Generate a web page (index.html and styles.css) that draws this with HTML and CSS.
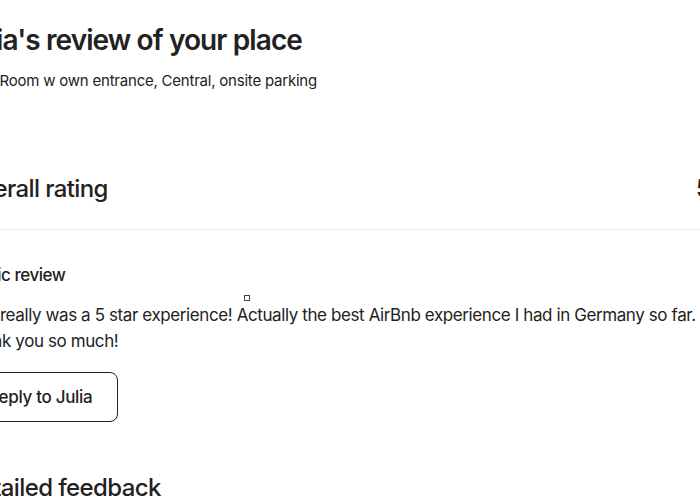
FILE: index.html
```html
<!DOCTYPE html>
<html lang="en">
<head>
<meta charset="utf-8">
<title>Julia's review of your place</title>
<link rel="stylesheet" href="styles.css">
</head>
<body>
<main class="page">
  <header class="head">
    <h1 class="title">Julia's review of your place</h1>
    <p class="listing">Cozy Room w own entrance, Central, onsite parking</p>
  </header>
  <section class="rating-row">
    <h2 class="section-title">Overall rating</h2>
    <span class="rating-value">5</span>
  </section>
  <section class="public">
    <h3 class="sub-title">Public review</h3>
    <p class="review-text"><span class="line">This really was a 5 star experience! Actually the best AirBnb experience I had in Germany so far.</span><span class="line">Thank you so much!</span></p>
    <button class="reply-btn" type="button">Reply to Julia</button>
  </section>
  <section class="detailed">
    <h2 class="section-title">Detailed feedback</h2>
  </section>
  <span class="cursor-mark"></span>
</main>
</body>
</html>
```
FILE: styles.css
```css
html, body {
  margin: 0;
  padding: 0;
  background: #ffffff;
  overflow: hidden;
}
body {
  font-family: Inter, "Noto Sans", "Liberation Sans", sans-serif;
  color: #222222;
  width: 700px;
  height: 500px;
}
.page {
  position: relative;
  margin-left: -37px;
  width: 748px;
}
.head {
  padding-top: 24px;
}
.title {
  margin: 0;
  font-size: 28px;
  line-height: 32px;
  font-weight: 600;
  letter-spacing: -0.9px;
  text-indent: -5px;
}
.listing {
  margin: 15px 0 0 0;
  font-size: 15px;
  line-height: 20px;
  font-weight: 400;
  letter-spacing: -0.22px;
  text-indent: -3px;
}
.rating-row {
  display: flex;
  justify-content: space-between;
  align-items: baseline;
  margin-top: 84px;
  padding-bottom: 26px;
  border-bottom: 1px solid #ebebeb;
}
.section-title {
  margin: 0;
  font-size: 24px;
  line-height: 28px;
  font-weight: 500;
  letter-spacing: -0.62px;
}
.rating-value {
  font-size: 24px;
  line-height: 28px;
  font-weight: 600;
}
.public {
  padding-top: 34px;
}
.sub-title {
  margin: 0;
  font-size: 17px;
  line-height: 22px;
  font-weight: 500;
  letter-spacing: -0.45px;
}
.review-text {
  margin: 16px 0 0 0;
  font-size: 17px;
  line-height: 26px;
  letter-spacing: -0.4px;
  white-space: nowrap;
}
.line {
  display: block;
}
.reply-btn {
  margin-top: 18px;
  height: 50px;
  padding: 0 25px 0 24px;
  border: 1px solid #222222;
  border-radius: 8px;
  background: #ffffff;
  color: #222222;
  font-family: inherit;
  font-size: 17px;
  font-weight: 500;
  letter-spacing: -0.3px;
}
.detailed {
  padding-top: 52px;
}
.cursor-mark {
  position: absolute;
  left: 281px;
  top: 295px;
  width: 4px;
  height: 4px;
  border: 1px solid #444444;
  background: #ffffff;
}
```
